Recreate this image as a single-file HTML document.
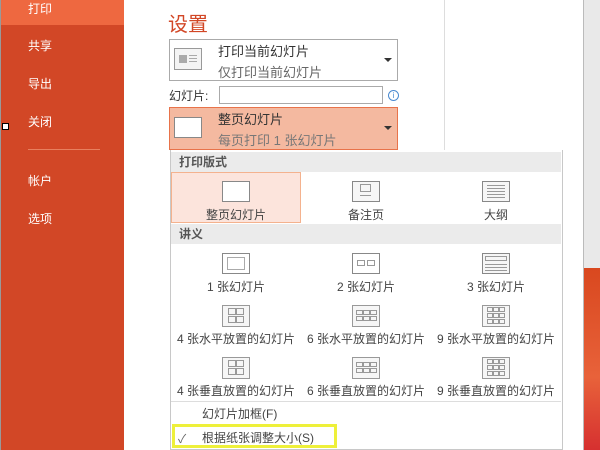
<!DOCTYPE html>
<html><head><meta charset="utf-8"><style>
*{margin:0;padding:0;box-sizing:border-box}
body{width:600px;height:450px;overflow:hidden;position:relative;background:#fff;font-family:"Liberation Sans","Noto Sans CJK SC",sans-serif;font-size:12px;color:#444}
.abs{position:absolute}
.side{left:0;top:0;width:124px;height:450px;background:#D24726;border-left:1px solid #999}
.side div{position:absolute;left:27px;color:#fff;font-size:12px}
.icon{position:absolute;border:1px solid #888;background:#fff}
svg.g{position:absolute}
.lbl{position:absolute;width:130px;text-align:center;font-size:12px;color:#444}
.hdr{position:absolute;left:171px;width:390px;height:20px;background:#ebebeb;font-weight:bold;color:#555;padding-left:8px;line-height:20px;font-size:12px}
</style></head><body>
<div class="abs side">
 <div style="left:0;top:0;width:123px;height:25px;background:#EE6840"></div>
 <div style="top:0px">打印</div>
 <div style="top:37px">共享</div>
 <div style="top:75px">导出</div>
 <div style="top:113px">关闭</div>
 <div style="top:149px;width:72px;height:1px;background:#e8805f"></div>
 <div style="top:172px">帐户</div>
 <div style="top:210px">选项</div>
</div>
<div class="abs" style="left:2px;top:123px;width:7px;height:7px;border:1px solid #000;background:#fff"></div>
<div class="abs" style="left:444px;top:0;width:1px;height:150px;background:#ddd"></div>
<div class="abs" style="left:583px;top:0;width:17px;height:450px;background:#e9e9e9;border-left:1px solid #bbb"></div>
<div class="abs" style="left:584px;top:268px;width:16px;height:182px;background:linear-gradient(#D9481F,#E8623A 60%,#D63030)"></div>

<div class="abs" style="left:168px;top:8px;font-size:20px;color:#D24726">设置</div>
<div class="abs" style="left:169px;top:39px;width:229px;height:42px;border:1px solid #aaa"></div>
<div class="abs" style="left:174px;top:48px;width:28px;height:22px;border:1px solid #999;background:#f4f4f4"></div>
<div class="abs" style="left:179px;top:55px;width:8px;height:8px;background:#aaa"></div>
<div class="abs" style="left:189px;top:55px;width:8px;height:1px;background:#aaa;box-shadow:0 3px #aaa,0 6px #aaa"></div>
<div class="abs" style="left:218px;top:41px;font-size:13px;color:#333">打印当前幻灯片</div>
<div class="abs" style="left:218px;top:62px;font-size:13px;color:#666">仅打印当前幻灯片</div>
<div class="abs" style="left:384px;top:58px;border:4px solid transparent;border-top:4px solid #333"></div>
<div class="abs" style="left:169px;top:87px;color:#333">幻灯片:</div>
<div class="abs" style="left:219px;top:86px;width:164px;height:18px;border:1px solid #aaa"></div>
<div class="abs" style="left:388px;top:90px;width:11px;height:11px;border:1px solid #4a8ad0;border-radius:50%;color:#4a8ad0;font-size:8px;text-align:center;line-height:9px">i</div>
<div class="abs" style="left:169px;top:107px;width:229px;height:43px;background:#F4B9A0;border:1px solid #E8734A"></div>
<div class="abs" style="left:174px;top:117px;width:28px;height:21px;border:1px solid #888;background:#fff"></div>
<div class="abs" style="left:218px;top:109px;font-size:13px;color:#333">整页幻灯片</div>
<div class="abs" style="left:218px;top:130px;font-size:13px;color:#777">每页打印 1 张幻灯片</div>
<div class="abs" style="left:384px;top:126px;border:4px solid transparent;border-top:4px solid #333"></div>

<div class="abs" style="left:170px;top:150px;width:393px;height:300px;border:1px solid #c8c8c8;border-top:none;background:#fff"></div>
<div class="hdr" style="top:152px">打印版式</div>
<div class="abs" style="left:171px;top:172px;width:130px;height:51px;background:#FCE4DC;border:1px solid #F4B28E"></div>
<div class="icon" style="left:222px;top:181px;width:28px;height:21px"></div>
<div class="icon" style="left:352px;top:181px;width:28px;height:21px;background:#f6f6f6"></div>
<div class="abs" style="left:360px;top:184px;width:11px;height:8px;border:1px solid #999"></div>
<div class="abs" style="left:360px;top:195px;width:11px;height:1px;background:#999"></div>
<div class="icon" style="left:482px;top:181px;width:28px;height:21px;background:#f6f6f6"></div>
<div class="abs" style="left:487px;top:185px;width:18px;height:1px;background:#999;box-shadow:0 3px #999,0 6px #999,0 9px #999,0 12px #999"></div>
<div class="lbl" style="left:171px;top:206px">整页幻灯片</div>
<div class="lbl" style="left:301px;top:206px">备注页</div>
<div class="lbl" style="left:431px;top:206px">大纲</div>
<div class="hdr" style="top:224px">讲义</div>

<div class="icon" style="left:222px;top:253px;width:28px;height:21px"></div>
<div class="abs" style="left:227px;top:257px;width:18px;height:13px;border:1px solid #aaa"></div>
<div class="icon" style="left:352px;top:253px;width:28px;height:21px"></div>
<div class="abs" style="left:357px;top:260px;width:8px;height:6px;border:1px solid #999"></div>
<div class="abs" style="left:367px;top:260px;width:8px;height:6px;border:1px solid #999"></div>
<div class="icon" style="left:482px;top:253px;width:28px;height:21px;background:#f6f6f6"></div>
<div class="abs" style="left:485px;top:256px;width:22px;height:5px;border:1px solid #999"></div>
<div class="abs" style="left:485px;top:264px;width:22px;height:1px;background:#999;box-shadow:0 3px #999,0 6px #999"></div>
<div class="lbl" style="left:171px;top:278px">1 张幻灯片</div>
<div class="lbl" style="left:301px;top:278px">2 张幻灯片</div>
<div class="lbl" style="left:431px;top:278px">3 张幻灯片</div>

<svg class="g" style="left:222px;top:305px" width="28" height="22" fill="none" stroke="#999"><rect x="0.5" y="0.5" width="27" height="21" fill="#f6f6f6"/><rect x="6.5" y="3.5" width="7" height="6"/><rect x="14.5" y="3.5" width="7" height="6"/><rect x="6.5" y="11.5" width="7" height="6"/><rect x="14.5" y="11.5" width="7" height="6"/></svg>
<svg class="g" style="left:352px;top:305px" width="28" height="22" fill="none" stroke="#999"><rect x="0.5" y="0.5" width="27" height="21" fill="#f6f6f6"/><rect x="4.5" y="5.5" width="6" height="4"/><rect x="11.5" y="5.5" width="6" height="4"/><rect x="18.5" y="5.5" width="6" height="4"/><rect x="4.5" y="11.5" width="6" height="4"/><rect x="11.5" y="11.5" width="6" height="4"/><rect x="18.5" y="11.5" width="6" height="4"/></svg>
<svg class="g" style="left:482px;top:305px" width="28" height="22" fill="none" stroke="#999"><rect x="0.5" y="0.5" width="27" height="21" fill="#f6f6f6"/><rect x="5.5" y="2.5" width="5" height="4"/><rect x="11.5" y="2.5" width="5" height="4"/><rect x="17.5" y="2.5" width="5" height="4"/><rect x="5.5" y="8.5" width="5" height="4"/><rect x="11.5" y="8.5" width="5" height="4"/><rect x="17.5" y="8.5" width="5" height="4"/><rect x="5.5" y="14.5" width="5" height="4"/><rect x="11.5" y="14.5" width="5" height="4"/><rect x="17.5" y="14.5" width="5" height="4"/></svg>
<div class="lbl" style="left:168px;top:330px;width:136px">4 张水平放置的幻灯片</div>
<div class="lbl" style="left:298px;top:330px;width:136px">6 张水平放置的幻灯片</div>
<div class="lbl" style="left:428px;top:330px;width:136px">9 张水平放置的幻灯片</div>

<svg class="g" style="left:222px;top:357px" width="28" height="22" fill="none" stroke="#999"><rect x="0.5" y="0.5" width="27" height="21" fill="#f6f6f6"/><rect x="6.5" y="3.5" width="7" height="6"/><rect x="14.5" y="3.5" width="7" height="6"/><rect x="6.5" y="11.5" width="7" height="6"/><rect x="14.5" y="11.5" width="7" height="6"/></svg>
<svg class="g" style="left:352px;top:357px" width="28" height="22" fill="none" stroke="#999"><rect x="0.5" y="0.5" width="27" height="21" fill="#f6f6f6"/><rect x="4.5" y="5.5" width="6" height="4"/><rect x="11.5" y="5.5" width="6" height="4"/><rect x="18.5" y="5.5" width="6" height="4"/><rect x="4.5" y="11.5" width="6" height="4"/><rect x="11.5" y="11.5" width="6" height="4"/><rect x="18.5" y="11.5" width="6" height="4"/></svg>
<svg class="g" style="left:482px;top:357px" width="28" height="22" fill="none" stroke="#999"><rect x="0.5" y="0.5" width="27" height="21" fill="#f6f6f6"/><rect x="5.5" y="2.5" width="5" height="4"/><rect x="11.5" y="2.5" width="5" height="4"/><rect x="17.5" y="2.5" width="5" height="4"/><rect x="5.5" y="8.5" width="5" height="4"/><rect x="11.5" y="8.5" width="5" height="4"/><rect x="17.5" y="8.5" width="5" height="4"/><rect x="5.5" y="14.5" width="5" height="4"/><rect x="11.5" y="14.5" width="5" height="4"/><rect x="17.5" y="14.5" width="5" height="4"/></svg>
<div class="lbl" style="left:168px;top:382px;width:136px">4 张垂直放置的幻灯片</div>
<div class="lbl" style="left:298px;top:382px;width:136px">6 张垂直放置的幻灯片</div>
<div class="lbl" style="left:428px;top:382px;width:136px">9 张垂直放置的幻灯片</div>

<div class="abs" style="left:171px;top:401px;width:390px;height:1px;background:#ddd"></div>
<div class="abs" style="left:202px;top:405px;color:#444">幻灯片加框(F)</div>
<div class="abs" style="left:172px;top:424px;width:165px;height:24px;border:3px solid #EEF03A"></div>
<div class="abs" style="left:178px;top:430px;color:#666">✓</div>
<div class="abs" style="left:202px;top:429px;color:#444">根据纸张调整大小(S)</div>
</body></html>
